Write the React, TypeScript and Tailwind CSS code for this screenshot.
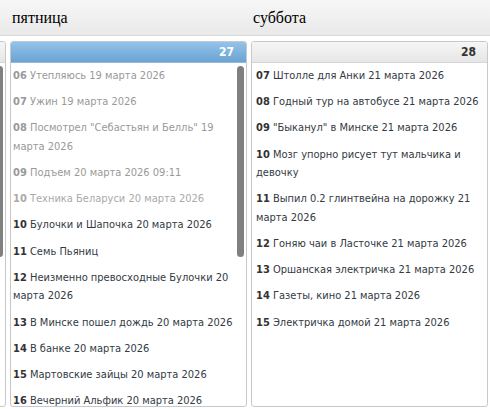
import React from "react";

type Entry = { n: string; t: string; past?: boolean; faint?: boolean };

const friday: Entry[] = [
  { n: "06", t: "Утепляюсь 19 марта 2026", past: true },
  { n: "07", t: "Ужин 19 марта 2026", past: true },
  { n: "08", t: "Посмотрел \"Себастьян и Белль\" 19 марта 2026", past: true },
  { n: "09", t: "Подъем 20 марта 2026 09:11", past: true },
  { n: "10", t: "Техника Беларуси 20 марта 2026", past: true, faint: true },
  { n: "10", t: "Булочки и Шапочка 20 марта 2026" },
  { n: "11", t: "Семь Пьяниц" },
  { n: "12", t: "Неизменно превосходные Булочки 20 марта 2026" },
  { n: "13", t: "В Минске пошел дождь 20 марта 2026" },
  { n: "14", t: "В банке 20 марта 2026" },
  { n: "15", t: "Мартовские зайцы 20 марта 2026" },
  { n: "16", t: "Вечерний Альфик 20 марта 2026" },
];

const saturday: Entry[] = [
  { n: "07", t: "Штолле для Анки 21 марта 2026" },
  { n: "08", t: "Годный тур на автобусе 21 марта 2026" },
  { n: "09", t: "\"Быканул\" в Минске 21 марта 2026" },
  { n: "10", t: "Мозг упорно рисует тут мальчика и девочку" },
  { n: "11", t: "Выпил 0.2 глинтвейна на дорожку 21 марта 2026" },
  { n: "12", t: "Гоняю чаи в Ласточке 21 марта 2026" },
  { n: "13", t: "Оршанская электричка 21 марта 2026" },
  { n: "14", t: "Газеты, кино 21 марта 2026" },
  { n: "15", t: "Электричка домой 21 марта 2026" },
];

function Item({ e }: { e: Entry }) {
  const color = e.faint ? "text-[#aaaaaa]" : e.past ? "text-[#999999]" : "text-[#333a44]";
  const numColor = e.faint ? "text-[#aaaaaa]" : e.past ? "text-[#999999]" : "text-[#333333]";
  return (
    <li className={`mb-[7.7px] leading-[18.5px] ${color}`}>
      <b className={`font-bold ${numColor}`}>{e.n}</b> {e.t}
    </li>
  );
}

function DayBox({
  num,
  items,
  today,
  scroll,
}: {
  num: string;
  items: Entry[];
  today?: boolean;
  scroll?: boolean;
}) {
  return (
    <div className="relative flex h-[366px] w-[237px] shrink-0 flex-col overflow-hidden rounded-[3px] border border-[#c8c8c8] bg-white">
      <div
        className={
          today
            ? "flex h-[21px] shrink-0 items-center justify-end border-b border-[#9ab8d4] bg-gradient-to-b from-[#94c3ea] to-[#6aa3d3] pr-[12px] text-[12px] font-bold text-white"
            : "flex h-[21px] shrink-0 items-center justify-end border-b border-[#d6d6d6] bg-gradient-to-b from-[#f6f6f6] to-[#e6e6e6] pr-[11px] text-[12px] font-bold text-[#333333]"
        }
      >
        {num}
      </div>
      <ul className={`flex-1 overflow-hidden pt-[4px] ${scroll ? "pl-[2px] pr-[12px]" : "pl-[4px] pr-[6px]"}`}>
        {items.map((e, i) => (
          <Item key={i} e={e} />
        ))}
      </ul>
      {scroll && (
        <div className="absolute right-[2px] top-[24px] h-[191px] w-[7px] rounded-[4px] bg-[#808080]" />
      )}
    </div>
  );
}

export default function App() {
  return (
    <div
      className="h-[409px] w-[490px] overflow-hidden bg-white text-[11px]"
      style={{ fontFamily: "'DejaVu Sans Condensed', 'DejaVu Sans', Verdana, sans-serif", fontStretch: "condensed" }}
    >
      <div className="h-[36px] border-b border-[#d9d9d9] bg-gradient-to-b from-[#f7f7f7] to-[#e9e9e9]">
        <div className="ml-[-231px] flex gap-[4px]">
          {["", "пятница", "суббота"].map((d, i) => (
            <div
              key={i}
              className="w-[237px] shrink-0 pl-[2px] pt-[8px] text-[16px] leading-[20px] text-black"
              style={{ fontFamily: "'Liberation Serif', 'Times New Roman', serif", fontStretch: "normal" }}
            >
              {d}
            </div>
          ))}
        </div>
      </div>
      <div className="ml-[-231px] mt-[5px] flex gap-[4px]">
        <DayBox num="" items={[]} scroll />
        <DayBox num="27" items={friday} today scroll />
        <DayBox num="28" items={saturday} />
      </div>
    </div>
  );
}
